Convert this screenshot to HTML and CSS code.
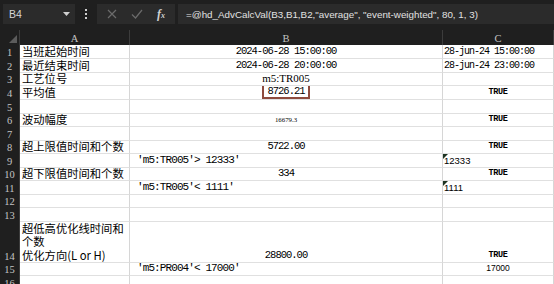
FILE: index.html
```html
<!DOCTYPE html>
<html lang="zh">

<head>
    <meta charset="utf-8">
    <title>Sheet</title>
    <link rel="stylesheet" href="styles.css">
</head>

<body>
    <header class="toolbar">
        <div class="namebox">
            <span>B4</span>
            <svg width="7" height="4" viewBox="0 0 7 4"><path d="M0 0H7L3.5 4Z" fill="#d0d0d0"/></svg>
        </div>
        <div class="dots"><i></i><i></i><i></i></div>
        <div class="fxbox">
            <svg width="10" height="10" viewBox="0 0 10 10"><path d="M1 1L9 9M9 1L1 9" stroke="#6b6b6b" stroke-width="1.2"/></svg>
            <svg width="12" height="10" viewBox="0 0 12 10"><path d="M1 5.5L4.5 9L11 1" stroke="#6b6b6b" stroke-width="1.2" fill="none"/></svg>
            <span class="fx">f<small>x</small></span>
        </div>
        <div class="formula">=@hd_AdvCalcVal(B3,B1,B2,"average", "event-weighted", 80, 1, 3)</div>
    </header>

    <section class="sheet">
        <div class="corner"></div>
        <div class="colhead">A</div>
        <div class="colhead">B</div>
        <div class="colhead">C</div>

        <div class="rowhead">1</div>
        <div class="cell cn">当班起始时间</div>
        <div class="cell ctr">2024-06-28 15:00:00</div>
        <div class="cell date">28-jun-24 15:00:00</div>

        <div class="rowhead">2</div>
        <div class="cell cn">最近结束时间</div>
        <div class="cell ctr">2024-06-28 20:00:00</div>
        <div class="cell date">28-jun-24 23:00:00</div>

        <div class="rowhead">3</div>
        <div class="cell cn">工艺位号</div>
        <div class="cell ctr serif">m5:TR005</div>
        <div class="cell"></div>

        <div class="rowhead">4</div>
        <div class="cell cn">平均值</div>
        <div class="cell ctr"><span class="selected">8726.21</span></div>
        <div class="cell ctr true">TRUE</div>

        <div class="rowhead">5</div>
        <div class="cell"></div>
        <div class="cell"></div>
        <div class="cell"></div>

        <div class="rowhead">6</div>
        <div class="cell cn">波动幅度</div>
        <div class="cell ctr tiny">16679.3</div>
        <div class="cell ctr true">TRUE</div>

        <div class="rowhead">7</div>
        <div class="cell"></div>
        <div class="cell"></div>
        <div class="cell"></div>

        <div class="rowhead">8</div>
        <div class="cell cn">超上限值时间和个数</div>
        <div class="cell ctr">5722.00</div>
        <div class="cell ctr true">TRUE</div>

        <div class="rowhead">9</div>
        <div class="cell"></div>
        <div class="cell quote">'m5:TR005'&gt; 12333'</div>
        <div class="cell num flag">12333</div>

        <div class="rowhead">10</div>
        <div class="cell cn">超下限值时间和个数</div>
        <div class="cell ctr">334</div>
        <div class="cell ctr true">TRUE</div>

        <div class="rowhead">11</div>
        <div class="cell"></div>
        <div class="cell quote">'m5:TR005'&lt; 1111'</div>
        <div class="cell num flag">1111</div>

        <div class="rowhead">12</div>
        <div class="cell"></div>
        <div class="cell"></div>
        <div class="cell"></div>

        <div class="rowhead">13</div>
        <div class="cell"></div>
        <div class="cell"></div>
        <div class="cell"></div>

        <div class="rowhead">14</div>
        <div class="cell cn wrap">超低高优化线时间和<br>个数<br>优化方向(L or H)</div>
        <div class="cell ctr">28800.00</div>
        <div class="cell ctr true">TRUE</div>

        <div class="rowhead">15</div>
        <div class="cell"></div>
        <div class="cell quote">'m5:PR004'&lt; 17000'</div>
        <div class="cell ctr num small">17000</div>

        <div class="rowhead">16</div>
        <div class="cell"></div>
        <div class="cell"></div>
        <div class="cell"></div>
    </section>
</body>

</html>
```

FILE: styles.css
```css
* {
    box-sizing: border-box;
}

body {
    margin: 0;
    background-color: #1f1f1f;
    overflow: hidden;
}

/* formula bar */

.toolbar {
    display: flex;
    height: 30px;
    padding: 4px 0 6px 3px;
    background-color: #1f1f1f;
    font-family: 'Liberation Sans', sans-serif;
}

.namebox {
    display: flex;
    align-items: center;
    justify-content: space-between;
    width: 72px;
    padding: 0 5px 0 6px;
    background-color: #2b2b2b;
    color: #d6d6d6;
    font-size: 10.5px;
}

.dots {
    display: flex;
    flex-direction: column;
    justify-content: center;
    align-items: center;
    gap: 2px;
    width: 22px;
}

.dots i {
    width: 2px;
    height: 2px;
    background-color: #cfcfcf;
}

.fxbox {
    display: flex;
    align-items: center;
    gap: 14px;
    width: 78px;
    padding-left: 10px;
    background-color: #2b2b2b;
}

.fx {
    color: #d0d0d0;
    font-family: 'Liberation Serif', serif;
    font-style: italic;
    font-size: 12px;
    font-weight: bold;
}

.fx small {
    font-size: 8px;
}

.formula {
    flex: 1;
    display: flex;
    align-items: center;
    margin-left: 3px;
    padding-left: 8px;
    background-color: #2b2b2b;
    color: #e2e2e2;
    font-size: 9.8px;
    white-space: nowrap;
    overflow: hidden;
}

/* grid */

.sheet {
    display: grid;
    grid-template-columns: 20px 110px 313px 111px;
    grid-template-rows: 15px 14px 14px 13px 14px 14px 13px 14px 13px 14px 13px 14px 13px 14px 41px 13px 14px;
    background-color: #fff;
}

.corner,
.colhead,
.rowhead {
    background-color: #1f1f1f;
    color: #c4c4c4;
    font-family: 'Liberation Serif', serif;
    font-size: 10.5px;
}

.corner {
    position: relative;
    border-right: 1px solid #3c3c3c;
}

.corner::after {
    content: "";
    position: absolute;
    right: 2px;
    bottom: 2px;
    border-left: 8px solid transparent;
    border-bottom: 8px solid #5c5c5c;
}

.colhead {
    display: flex;
    align-items: flex-end;
    justify-content: center;
    padding-bottom: 1px;
    border-right: 1px solid #3c3c3c;
}

.rowhead {
    display: flex;
    align-items: flex-end;
    justify-content: center;
    border-right: 1px solid #3c3c3c;
    line-height: 13px;
}

.cell {
    display: flex;
    align-items: flex-end;
    padding: 0 2px;
    border-right: 1px solid #d6d6d6;
    border-bottom: 1px solid #e0e0e0;
    color: #000;
    font-family: 'Liberation Mono', monospace;
    font-size: 10.5px;
    letter-spacing: -1px;
    line-height: 13px;
    white-space: nowrap;
    overflow: hidden;
}

.ctr {
    justify-content: center;
}

.cn {
    font-family: 'Noto Sans CJK SC', sans-serif;
    font-size: 11.3px;
    letter-spacing: 0;
    overflow: visible;
}

.wrap {
    white-space: normal;
    line-height: 13.3px;
}

.date {
    padding-left: 1px;
    font-size: 10px;
}

.serif {
    font-family: 'Liberation Serif', serif;
    font-size: 11px;
    letter-spacing: 0;
}

.selected {
    padding: 0 3px;
    border: 2px solid #8e4b3e;
    line-height: 11px;
}

.true {
    font-size: 8.5px;
    font-weight: bold;
    letter-spacing: -0.3px;
}

.tiny {
    font-family: 'Liberation Serif', serif;
    font-size: 6.8px;
    letter-spacing: 0;
}

.quote {
    padding-left: 7px;
    font-size: 11px;
    letter-spacing: -0.9px;
}

.num {
    font-family: 'Liberation Sans', sans-serif;
    font-size: 9.5px;
    letter-spacing: 0;
}

.small {
    font-size: 8.5px;
}

.flag {
    position: relative;
    padding-left: 1px;
}

.flag::before {
    content: "";
    position: absolute;
    left: 0;
    top: 0;
    border-top: 5px solid #1d3322;
    border-right: 5px solid transparent;
}
```
